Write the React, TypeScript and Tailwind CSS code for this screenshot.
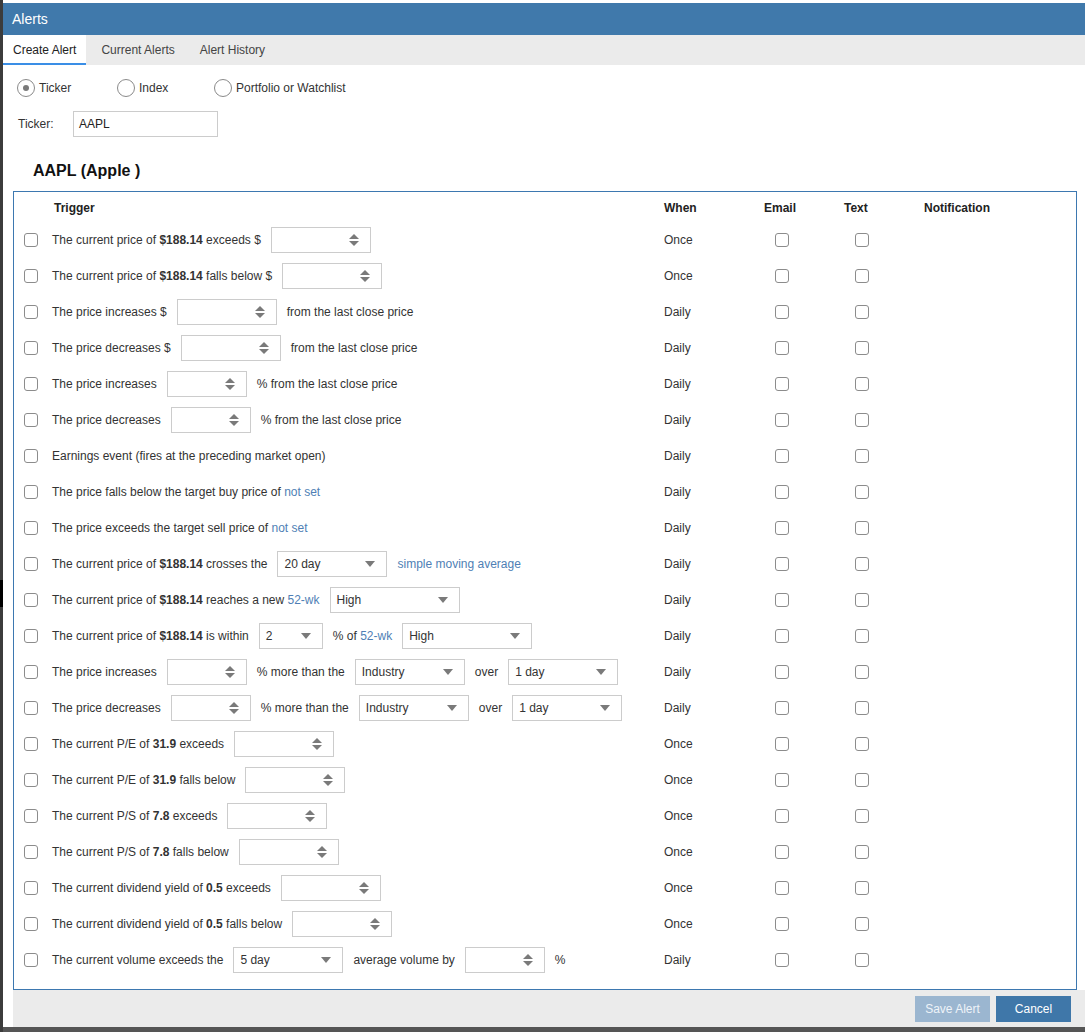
import type { ReactNode } from "react"

function Checkbox() {
  return <span className="block h-[14px] w-[14px] rounded-[3px] border border-[#8c8c8c] bg-white" />
}

function NumInput({ w }: { w: string }) {
  return (
    <div className={`flex h-[26px] shrink-0 items-center justify-end border border-[#cccccc] bg-white pr-[11px] ${w}`}>
      <svg width="10" height="12" viewBox="0 0 10 12" fill="#7a7a7a">
        <path d="M5 0 L10 5 L0 5 Z" />
        <path d="M0 7 L10 7 L5 12 Z" />
      </svg>
    </div>
  )
}

function Select({ w, value }: { w: string; value: string }) {
  return (
    <div className={`flex h-[26px] shrink-0 items-center justify-between border border-[#cccccc] bg-white pl-[6px] pr-[11px] ${w}`}>
      <span>{value}</span>
      <svg width="10" height="6" viewBox="0 0 10 6" fill="#7a7a7a">
        <path d="M0 0 L10 0 L5 6 Z" />
      </svg>
    </div>
  )
}

function Link({ children }: { children: ReactNode }) {
  return <span className="text-[#4f7fb5]">{children}</span>
}

function Radio({ checked, label, className }: { checked?: boolean; label: string; className?: string }) {
  return (
    <div className={`flex items-center ${className ?? ""}`}>
      <span className="flex h-[18px] w-[18px] items-center justify-center rounded-full border-[1.5px] border-[#8a8a8a] bg-white">
        {checked && <span className="h-[6px] w-[6px] rounded-full bg-[#7a7a7a]" />}
      </span>
      <span className="ml-[4px] text-[12px] text-[#333]">{label}</span>
    </div>
  )
}

type Row = { trigger: ReactNode; when: string }

const rows: Row[] = [
  {
    trigger: (
      <>
        <span>
          The current price of <b>$188.14</b> exceeds $
        </span>
        <NumInput w="w-[100px]" />
      </>
    ),
    when: "Once",
  },
  {
    trigger: (
      <>
        <span>
          The current price of <b>$188.14</b> falls below $
        </span>
        <NumInput w="w-[100px]" />
      </>
    ),
    when: "Once",
  },
  {
    trigger: (
      <>
        <span>The price increases $</span>
        <NumInput w="w-[100px]" />
        <span>from the last close price</span>
      </>
    ),
    when: "Daily",
  },
  {
    trigger: (
      <>
        <span>The price decreases $</span>
        <NumInput w="w-[100px]" />
        <span>from the last close price</span>
      </>
    ),
    when: "Daily",
  },
  {
    trigger: (
      <>
        <span>The price increases</span>
        <NumInput w="w-[80px]" />
        <span>% from the last close price</span>
      </>
    ),
    when: "Daily",
  },
  {
    trigger: (
      <>
        <span>The price decreases</span>
        <NumInput w="w-[80px]" />
        <span>% from the last close price</span>
      </>
    ),
    when: "Daily",
  },
  { trigger: <span>Earnings event (fires at the preceding market open)</span>, when: "Daily" },
  {
    trigger: (
      <span>
        The price falls below the target buy price of <Link>not set</Link>
      </span>
    ),
    when: "Daily",
  },
  {
    trigger: (
      <span>
        The price exceeds the target sell price of <Link>not set</Link>
      </span>
    ),
    when: "Daily",
  },
  {
    trigger: (
      <>
        <span>
          The current price of <b>$188.14</b> crosses the
        </span>
        <Select w="w-[110px]" value="20 day" />
        <Link>simple moving average</Link>
      </>
    ),
    when: "Daily",
  },
  {
    trigger: (
      <>
        <span>
          The current price of <b>$188.14</b> reaches a new <Link>52-wk</Link>
        </span>
        <Select w="w-[130px]" value="High" />
      </>
    ),
    when: "Daily",
  },
  {
    trigger: (
      <>
        <span>
          The current price of <b>$188.14</b> is within
        </span>
        <Select w="w-[64px]" value="2" />
        <span>
          % of <Link>52-wk</Link>
        </span>
        <Select w="w-[130px]" value="High" />
      </>
    ),
    when: "Daily",
  },
  {
    trigger: (
      <>
        <span>The price increases</span>
        <NumInput w="w-[80px]" />
        <span>% more than the</span>
        <Select w="w-[110px]" value="Industry" />
        <span>over</span>
        <Select w="w-[110px]" value="1 day" />
      </>
    ),
    when: "Daily",
  },
  {
    trigger: (
      <>
        <span>The price decreases</span>
        <NumInput w="w-[80px]" />
        <span>% more than the</span>
        <Select w="w-[110px]" value="Industry" />
        <span>over</span>
        <Select w="w-[110px]" value="1 day" />
      </>
    ),
    when: "Daily",
  },
  {
    trigger: (
      <>
        <span>
          The current P/E of <b>31.9</b> exceeds
        </span>
        <NumInput w="w-[100px]" />
      </>
    ),
    when: "Once",
  },
  {
    trigger: (
      <>
        <span>
          The current P/E of <b>31.9</b> falls below
        </span>
        <NumInput w="w-[100px]" />
      </>
    ),
    when: "Once",
  },
  {
    trigger: (
      <>
        <span>
          The current P/S of <b>7.8</b> exceeds
        </span>
        <NumInput w="w-[100px]" />
      </>
    ),
    when: "Once",
  },
  {
    trigger: (
      <>
        <span>
          The current P/S of <b>7.8</b> falls below
        </span>
        <NumInput w="w-[100px]" />
      </>
    ),
    when: "Once",
  },
  {
    trigger: (
      <>
        <span>
          The current dividend yield of <b>0.5</b> exceeds
        </span>
        <NumInput w="w-[100px]" />
      </>
    ),
    when: "Once",
  },
  {
    trigger: (
      <>
        <span>
          The current dividend yield of <b>0.5</b> falls below
        </span>
        <NumInput w="w-[100px]" />
      </>
    ),
    when: "Once",
  },
  {
    trigger: (
      <>
        <span>The current volume exceeds the</span>
        <Select w="w-[110px]" value="5 day" />
        <span>average volume by</span>
        <NumInput w="w-[80px]" />
        <span>%</span>
      </>
    ),
    when: "Daily",
  },
]

const cols = "grid grid-cols-[28px_612px_100px_80px_80px_1fr] items-center pl-[10px]"

export default function App() {
  return (
    <div className="flex h-[1032px] w-[1085px] overflow-hidden bg-white font-['Liberation_Sans',Arial,sans-serif] text-[12px] text-[#333]">
      {/* window edge on the left */}
      <div className="flex w-[3px] shrink-0 flex-col">
        <div className="h-[580px] bg-[#3c3c3c]" />
        <div className="h-[27px] bg-black" />
        <div className="flex-1 bg-[#3c3c3c]" />
      </div>

      <div className="flex min-w-0 flex-1 flex-col">
        <div className="h-[3px] bg-white" />
        <div className="flex h-[32px] items-center bg-[#4079ab] pl-[9px] text-[14px] text-white">Alerts</div>

        <div className="flex h-[30px] gap-[5px] bg-[#ebebeb]">
          <div className="flex items-center border-b-[2px] border-[#3a8ee6] bg-white px-[10px] pt-[2px] text-[#222]">Create Alert</div>
          <div className="flex items-center px-[10px] text-[#444]">Current Alerts</div>
          <div className="flex items-center px-[10px] text-[#444]">Alert History</div>
        </div>

        <div className="mt-[14px] flex h-[18px] items-center pl-[14px]">
          <Radio checked label="Ticker" className="w-[100px]" />
          <Radio label="Index" className="w-[97px]" />
          <Radio label="Portfolio or Watchlist" />
        </div>

        <div className="mt-[14px] flex h-[26px] items-center pl-[15px]">
          <span className="w-[55px] text-[#333]">Ticker:</span>
          <div className="flex h-[26px] w-[145px] items-center border border-[#cccccc] pl-[5px] text-[#222]">AAPL</div>
        </div>

        <div className="mt-[25px] h-[18px] pl-[30px] text-[16px] font-bold leading-[18px] text-[#111]">AAPL (Apple )</div>

        <div className="mt-[11px] ml-[10px] mr-[8px] h-[799px] border border-[#3d78b0] pt-[6px]">
          <div className={`${cols} mb-[4px] h-[20px] font-bold text-[#222]`}>
            <span />
            <span className="pl-[2px]">Trigger</span>
            <span>When</span>
            <span>Email</span>
            <span>Text</span>
            <span>Notification</span>
          </div>
          {rows.map((r, i) => (
            <div key={i} className={`${cols} h-[36px]`}>
              <Checkbox />
              <div className="flex items-center gap-[10px] whitespace-nowrap">{r.trigger}</div>
              <span>{r.when}</span>
              <span className="pl-[11px]">
                <Checkbox />
              </span>
              <span className="pl-[11px]">
                <Checkbox />
              </span>
              <span />
            </div>
          ))}
        </div>

        <div className="ml-[10px] flex h-[37px] justify-end gap-[6px] bg-[#ebebeb] pr-[14px] pt-[6px]">
          <div className="flex h-[26px] w-[75px] items-center justify-center bg-[#9bb6d0] text-[#eef3f8]">Save Alert</div>
          <div className="flex h-[26px] w-[75px] items-center justify-center bg-[#3f77a9] text-white">Cancel</div>
        </div>

        <div className="h-[5px] bg-[#555555]" />
      </div>
    </div>
  )
}
